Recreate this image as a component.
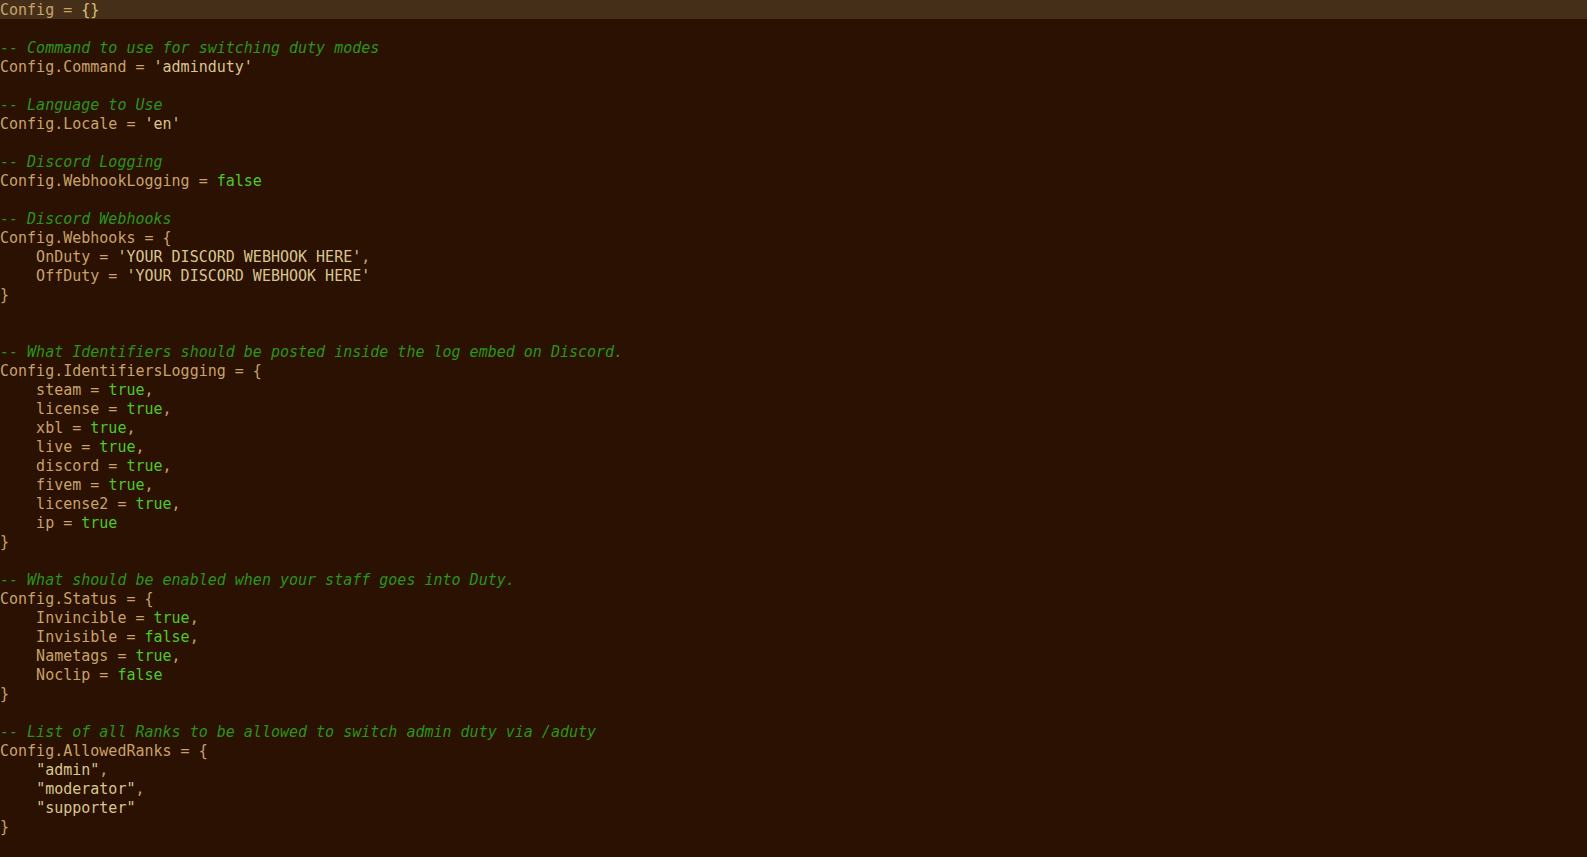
import React from "react";

type Tok = { t: string; k?: "c" | "s" | "b" | "p" };

const kw = (t: string): Tok => ({ t, k: "b" });
const str = (t: string): Tok => ({ t, k: "s" });
const cm = (t: string): Tok => ({ t, k: "c" });
const pl = (t: string): Tok => ({ t });

const lines: Tok[][] = [
  [pl("Config = "), { t: "{}", k: "p" }],
  [],
  [cm("-- Command to use for switching duty modes")],
  [pl("Config.Command = "), str("'adminduty'")],
  [],
  [cm("-- Language to Use")],
  [pl("Config.Locale = "), str("'en'")],
  [],
  [cm("-- Discord Logging")],
  [pl("Config.WebhookLogging = "), kw("false")],
  [],
  [cm("-- Discord Webhooks")],
  [pl("Config.Webhooks = {")],
  [pl("    OnDuty = "), str("'YOUR DISCORD WEBHOOK HERE'"), pl(",")],
  [pl("    OffDuty = "), str("'YOUR DISCORD WEBHOOK HERE'")],
  [pl("}")],
  [],
  [],
  [cm("-- What Identifiers should be posted inside the log embed on Discord.")],
  [pl("Config.IdentifiersLogging = {")],
  [pl("    steam = "), kw("true"), pl(",")],
  [pl("    license = "), kw("true"), pl(",")],
  [pl("    xbl = "), kw("true"), pl(",")],
  [pl("    live = "), kw("true"), pl(",")],
  [pl("    discord = "), kw("true"), pl(",")],
  [pl("    fivem = "), kw("true"), pl(",")],
  [pl("    license2 = "), kw("true"), pl(",")],
  [pl("    ip = "), kw("true")],
  [pl("}")],
  [],
  [cm("-- What should be enabled when your staff goes into Duty.")],
  [pl("Config.Status = {")],
  [pl("    Invincible = "), kw("true"), pl(",")],
  [pl("    Invisible = "), kw("false"), pl(",")],
  [pl("    Nametags = "), kw("true"), pl(",")],
  [pl("    Noclip = "), kw("false")],
  [pl("}")],
  [],
  [cm("-- List of all Ranks to be allowed to switch admin duty via /aduty")],
  [pl("Config.AllowedRanks = {")],
  [pl("    "), str('"admin"'), pl(",")],
  [pl("    "), str('"moderator"'), pl(",")],
  [pl("    "), str('"supporter"')],
  [pl("}")],
];

function Token({ tok }: { tok: Tok }) {
  if (tok.k === "c") return <span className="italic text-[#2d941a]">{tok.t}</span>;
  if (tok.k === "s") return <span className="text-[#d9c58f]">{tok.t}</span>;
  if (tok.k === "b") return <span className="text-[#4fc82b]">{tok.t}</span>;
  if (tok.k === "p") return <span className="text-[#e0c27a]">{tok.t}</span>;
  return <span>{tok.t}</span>;
}

export default function App() {
  return (
    <div className="min-h-screen w-full bg-[#2a1102] text-[#c9a26a] text-[15px] font-['DejaVu_Sans_Mono','Liberation_Mono',monospace]">
      {lines.map((line, i) => (
        <div
          key={i}
          className={`h-[19px] pt-[2px] leading-[17px] whitespace-pre ${i === 0 ? "bg-[#452f19]" : ""}`}
        >
          {line.map((tok, j) => (
            <Token key={j} tok={tok} />
          ))}
        </div>
      ))}
    </div>
  );
}
